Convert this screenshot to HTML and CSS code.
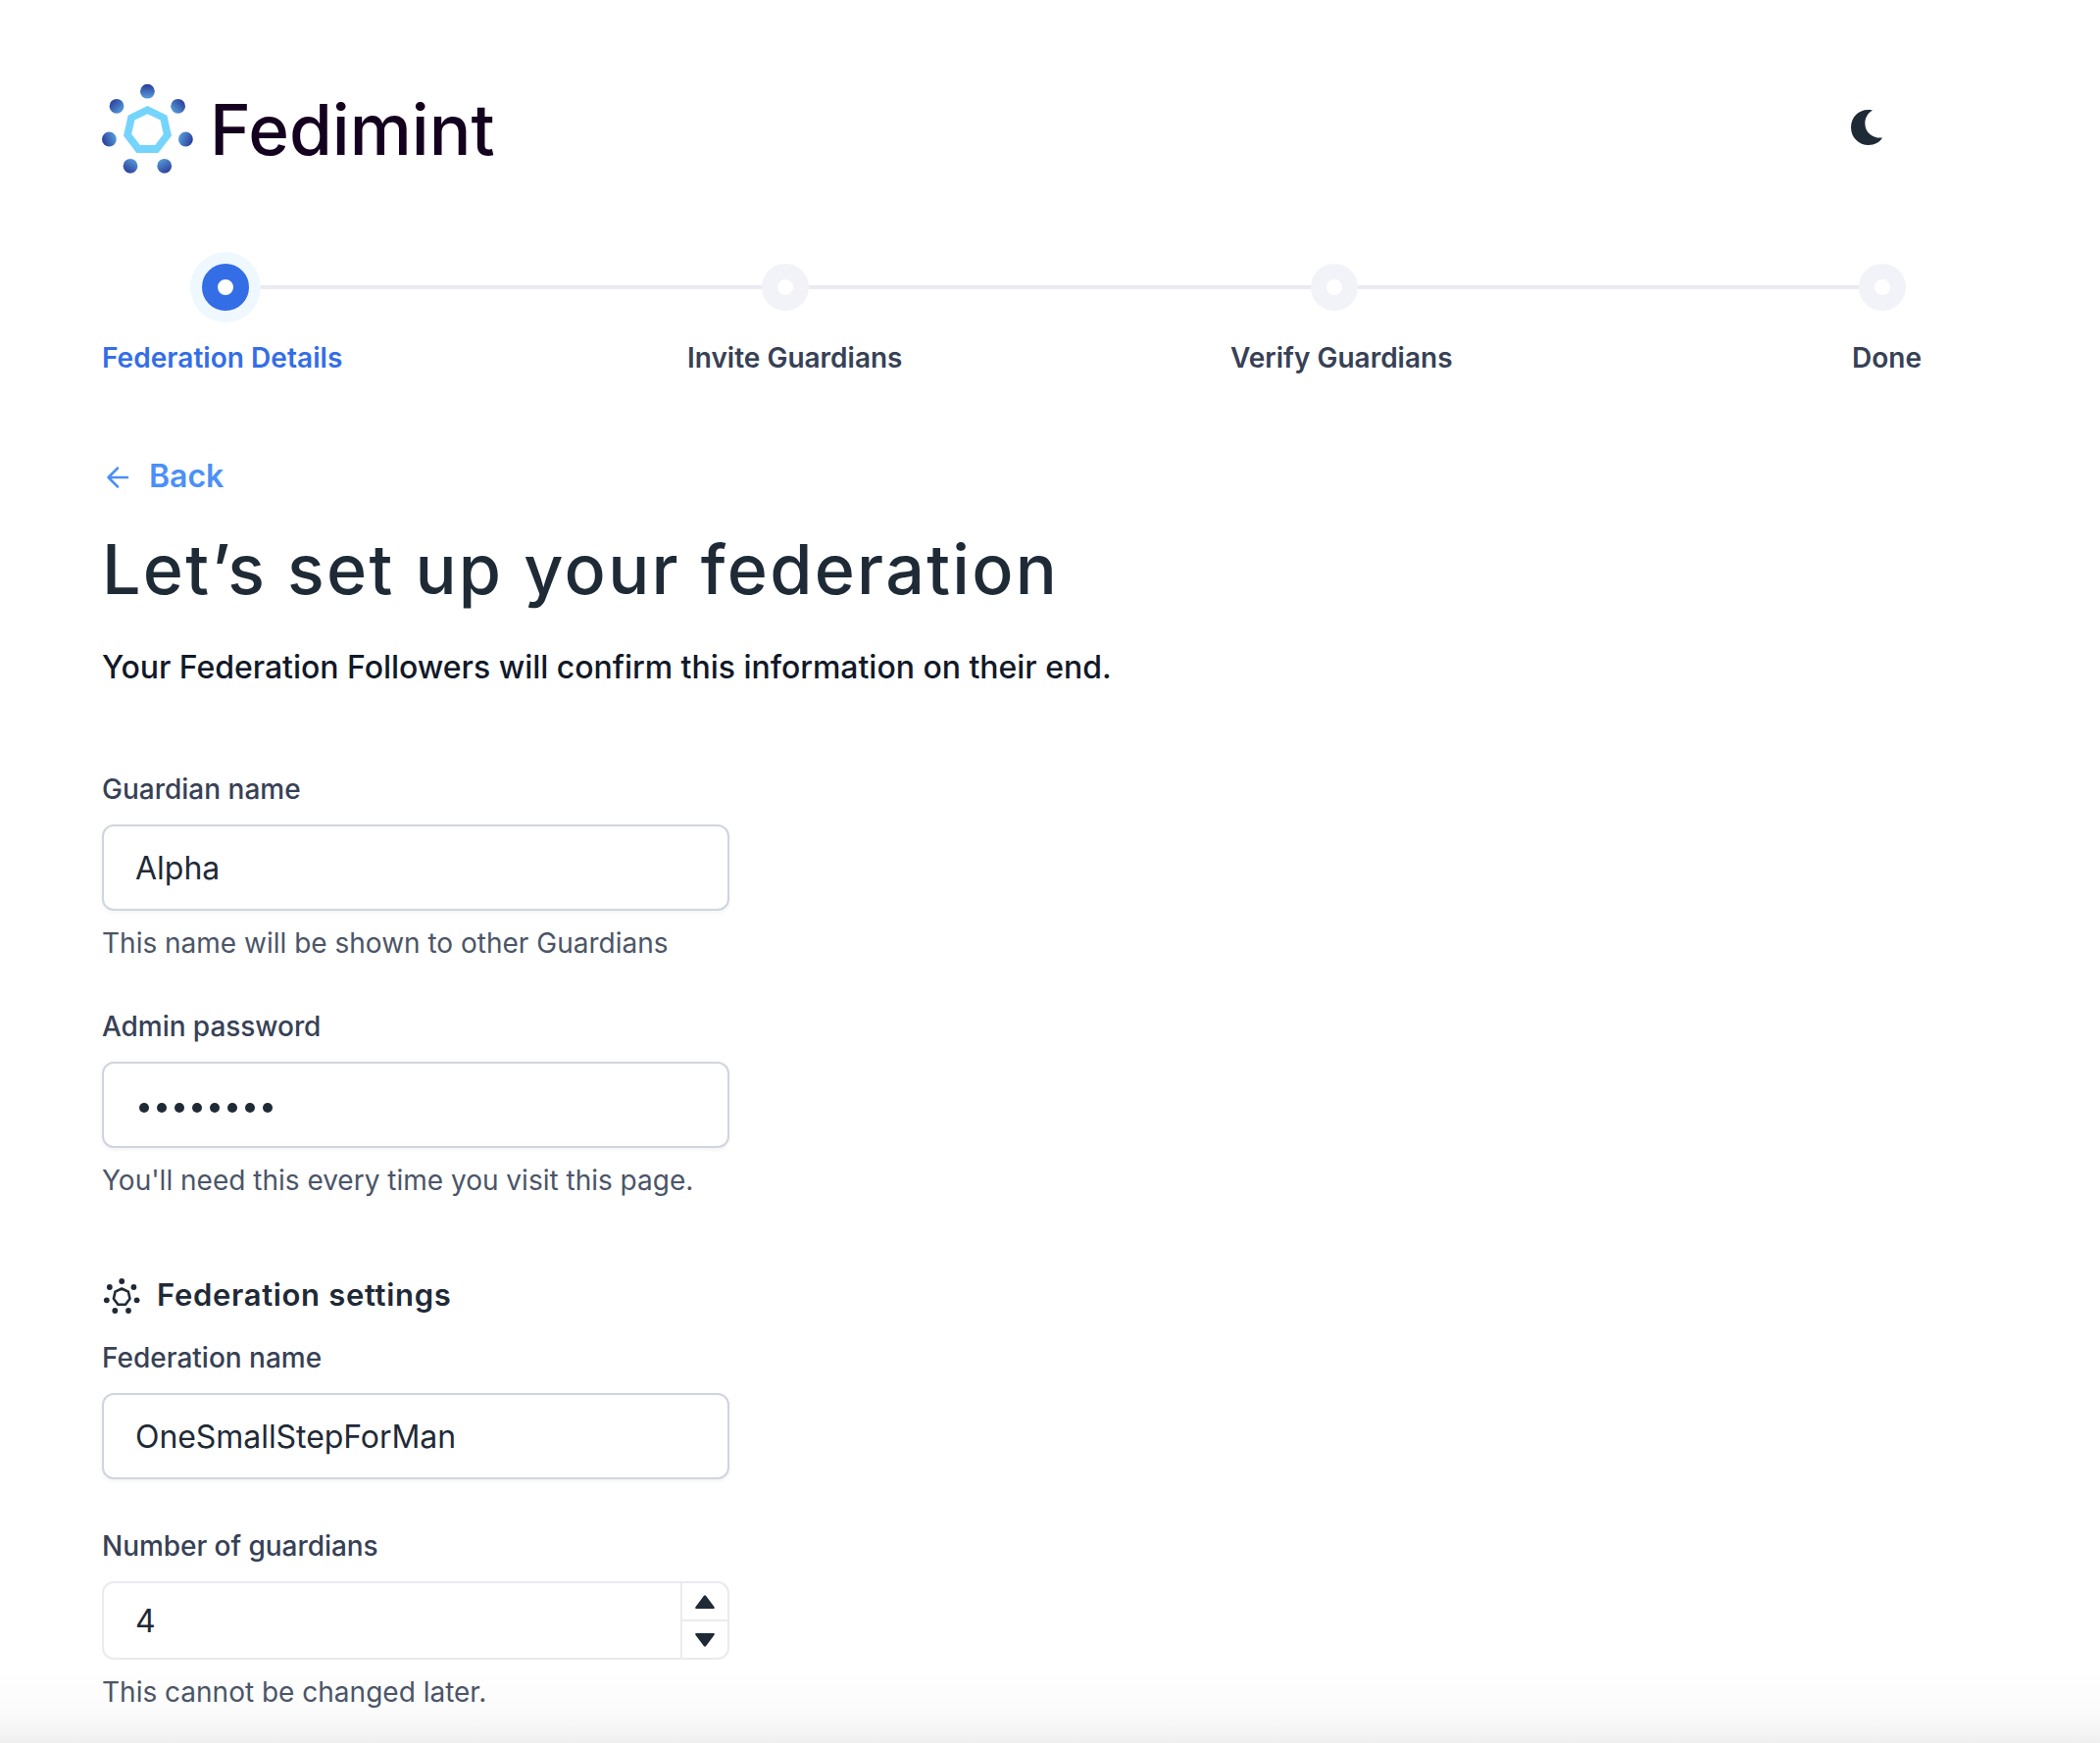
FILE: index.html
```html
<!DOCTYPE html>
<html lang="en">
<head>
<meta charset="utf-8">
<title>Fedimint</title>
<link rel="stylesheet" href="styles.css">
</head>
<body>
<div class="page">
  <header class="header">
    <div class="brand">
      <svg class="brand-mark" viewBox="0 0 94 92" aria-hidden="true">
        <defs>
          <linearGradient id="down" x1="0" y1="0" x2="0" y2="1"><stop offset="0" stop-color="#2b3a98"/><stop offset="1" stop-color="#569fdc"/></linearGradient>
          <linearGradient id="downRight" x1="0" y1="0" x2="1" y2="1"><stop offset="0.1" stop-color="#2b3a98"/><stop offset="0.9" stop-color="#569fdc"/></linearGradient>
          <linearGradient id="downLeft" x1="1" y1="0" x2="0" y2="1"><stop offset="0.1" stop-color="#2b3a98"/><stop offset="0.9" stop-color="#569fdc"/></linearGradient>
          <linearGradient id="right" x1="0" y1="0.7" x2="1" y2="0.3"><stop offset="0" stop-color="#2b3a98"/><stop offset="1" stop-color="#569fdc"/></linearGradient>
          <linearGradient id="left" x1="1" y1="0.7" x2="0" y2="0.3"><stop offset="0" stop-color="#2b3a98"/><stop offset="1" stop-color="#569fdc"/></linearGradient>
          <linearGradient id="upRight" x1="0.2" y1="1" x2="0.8" y2="0"><stop offset="0" stop-color="#2b3a98"/><stop offset="1" stop-color="#569fdc"/></linearGradient>
          <linearGradient id="upLeft" x1="0.8" y1="1" x2="0.2" y2="0"><stop offset="0" stop-color="#2b3a98"/><stop offset="1" stop-color="#569fdc"/></linearGradient>
        </defs>
        <circle cx="46.4" cy="8.2" r="7.4" fill="url(#down)"/>
        <circle cx="15" cy="23.3" r="7.4" fill="url(#downRight)"/>
        <circle cx="77.6" cy="23.3" r="7.4" fill="url(#downLeft)"/>
        <circle cx="7.4" cy="57" r="7.4" fill="url(#right)"/>
        <circle cx="85.4" cy="57" r="7.4" fill="url(#left)"/>
        <circle cx="29" cy="84.3" r="7.4" fill="url(#upRight)"/>
        <circle cx="63.7" cy="84.3" r="7.4" fill="url(#upLeft)"/>
        <path fill="#75d4fc" fill-rule="evenodd" d="M46.4 22.9 66.4 32.7 71 53.4 57.4 71H35.3L22 53.4 26.6 32.7ZM46.4 31.3 33.4 37.4 30.2 51.7 38.9 63H54.3L62.7 51.7 59.6 37.4Z"/>
      </svg>
      <span class="brand-name">Fedimint</span>
    </div>
    <svg class="moon" viewBox="0 0 32 36" aria-hidden="true"><path fill="#1f2a37" d="M22 .5C9.500-2.200 0 6.500 0 18 0 28.300 8 36 18 36 24 36 29.200 33.200 32 28.500 22.500 29.500 14.300 23.500 14.300 13.700 14.300 8.200 17 3.500 22 .5Z"/></svg>
  </header>

  <div class="stepper">
    <div class="track">
      <span class="dot dot-active"></span><span class="line"></span>
      <span class="dot"></span><span class="line"></span>
      <span class="dot"></span><span class="line"></span>
      <span class="dot"></span>
    </div>
    <div class="step-labels">
      <span class="step-active">Federation Details</span>
      <span class="step-invite">Invite Guardians</span>
      <span class="step-verify">Verify Guardians</span>
      <span class="step-done">Done</span>
    </div>
  </div>

  <a class="back">
    <svg class="back-arrow" viewBox="0 0 24 24" aria-hidden="true"><path d="M22 12H2.500M12 2.500 2.500 12 12 21.500" fill="none" stroke="#4c8ff7" stroke-width="2.500" stroke-linecap="round" stroke-linejoin="round"/></svg>
    <span class="back-text">Back</span>
  </a>
  <h1 class="title">Let’s set up your federation</h1>
  <p class="subtitle">Your Federation Followers will confirm this information on their end.</p>

  <section class="fields">
    <div class="field">
      <div class="label label-guardian">Guardian name</div>
      <div class="input">Alpha</div>
      <div class="help help-name">This name will be shown to other Guardians</div>
    </div>
    <div class="field">
      <div class="label label-password">Admin password</div>
      <div class="input password"><i></i><i></i><i></i><i></i><i></i><i></i><i></i><i></i></div>
      <div class="help help-password">You'll need this every time you visit this page.</div>
    </div>
  </section>

  <section class="settings">
    <h2 class="settings-head">
      <svg class="settings-icon" viewBox="0 0 40 40" aria-hidden="true">
        <g fill="#1f2a37"><circle cx="20.200" cy="6" r="2.900"/><circle cx="7.800" cy="12" r="2.900"/><circle cx="32.400" cy="12" r="2.900"/><circle cx="4.800" cy="25.300" r="2.900"/><circle cx="35.600" cy="25.300" r="2.900"/><circle cx="13.300" cy="36" r="2.900"/><circle cx="27" cy="36" r="2.900"/></g>
        <path d="M20.200 13.500 26.900 16.700 28.500 23.700 24 29.700H16.400L11.900 23.700 13.500 16.700Z" fill="none" stroke="#1f2a37" stroke-width="2.600" stroke-linejoin="round"/>
      </svg>
      <span class="settings-title">Federation settings</span>
    </h2>
    <div class="field">
      <div class="label label-federation">Federation name</div>
      <div class="input value-federation">OneSmallStepForMan</div>
    </div>
    <div class="field field-number">
      <div class="label label-number">Number of guardians</div>
      <div class="number">
        <div class="number-value">4</div>
        <div class="spinner">
          <span class="spin"><svg width="20" height="14" viewBox="0 0 20 14"><path d="M8.800 1Q10-.5 11.200 1L19.600 12.300Q20.300 14 18.800 14H1.200Q-.3 14 .4 12.300Z" fill="#1f2a37"/></svg></span>
          <span class="spin spin-down"><svg width="20" height="14" viewBox="0 0 20 14"><path d="M8.800 13Q10 14.500 11.200 13L19.600 1.700Q20.300 0 18.800 0H1.200Q-.3 0 .4 1.700Z" fill="#1f2a37"/></svg></span>
        </div>
      </div>
      <div class="help help-number">This cannot be changed later.</div>
    </div>
  </section>
</div>
</body>
</html>
```
FILE: styles.css
```css
* { box-sizing: border-box; }
body { margin: 0; background: #fff; font-family: Inter, "Liberation Sans", sans-serif; color: #1f2a37; }
.page {
  width: 2142px; height: 1778px; padding: 85px 182px 0 104px; overflow: hidden; white-space: nowrap;
  background: linear-gradient(to bottom, #fff 0, #fff 1700px, #fcfcfc 1740px, #f7f7f7 1760px, #efefef 1778px);
}
.header { display: flex; justify-content: space-between; align-items: flex-start; width: 1816px; height: 92px; }
.brand { display: flex; }
.brand-mark { width: 94px; height: 92px; }
.brand-name { margin-left: 16px; padding-top: 1px; font-size: 71px; line-height: 92px; font-weight: 500; color: #14001f; }
.moon { width: 32px; height: 36px; margin-top: 27px; }

.stepper { margin-top: 92px; }
.track { display: flex; align-items: center; height: 48px; width: 1738px; margin-left: 102px; }
.dot { width: 48px; height: 48px; flex: none; border-radius: 50%; border: 16px solid #f2f3f8; background: #fff; }
.dot-active { border-color: #336ee7; box-shadow: 0 0 0 12px #f0f8ff; }
.line { flex: 1; height: 4px; background: #eaeaf0; }
.dot-active + .line { flex: 1 0 0; margin-left: 12px; }
.step-labels { display: grid; grid-template-columns: 597px 554px 634px auto; margin-top: 28px; font-size: 28px; line-height: 40px; font-weight: 600; color: #374156; }
.step-active { color: #336ee7; letter-spacing: 0.05px; }

.back { display: flex; align-items: center; gap: 20px; height: 48px; margin-top: 77px; padding-left: 4px; font-size: 32px; line-height: 48px; font-weight: 600; color: #4c8ff7; }
.back-arrow { width: 24px; height: 24px; margin-top: 1px; }
.title { margin: 27px 0 0; font-size: 70px; line-height: 88px; font-weight: 500; letter-spacing: 2.28px; color: #1f2a37; }
.subtitle { margin: 32px 0 0; font-size: 32px; line-height: 48px; font-weight: 500; letter-spacing: -0.03px; color: #111928; }

.fields { display: flex; flex-direction: column; gap: 44px; margin-top: 80px; }
.field { width: 640px; }
.label { font-size: 28px; line-height: 40px; font-weight: 500; color: #374156; }
.label-password, .label-number { letter-spacing: -0.05px; }
.input { display: flex; align-items: center; height: 88px; margin-top: 16px; padding: 2px 0 0 32px; border: 2px solid #d0d5dd; border-radius: 12px; background: #fff; box-shadow: 0 2px 4px rgba(16, 24, 40, 0.05); font-size: 32px; line-height: 48px; }
.value-federation { letter-spacing: -0.06px; }
.help { margin-top: 12px; font-size: 28px; line-height: 42px; color: #4b5568; }
.password { gap: 8px; padding: 5px 0 0 36px; }
.password i { width: 10px; height: 10px; border-radius: 50%; background: #1f2a37; }

.settings { margin-top: 72px; }
.settings-head { display: flex; align-items: center; height: 48px; margin: 0 0 20px; font-size: 31px; line-height: 48px; font-weight: 600; }
.settings-icon { width: 40px; height: 40px; }
.settings-title { margin-left: 16px; letter-spacing: 0.68px; }
.field-number { margin-top: 48px; }
.number { display: flex; height: 80px; margin-top: 16px; border: 2px solid #eaeaf0; border-radius: 12px; background: #fff; }
.number-value { flex: 1; padding: 1px 0 0 32px; font-size: 32px; line-height: 76px; }
.spinner { width: 48px; display: flex; flex-direction: column; border-left: 2px solid #eaeaf0; }
.spin { flex: 1; display: flex; align-items: center; justify-content: center; }
.spin-down { border-top: 2px solid #eaeaf0; }
```
